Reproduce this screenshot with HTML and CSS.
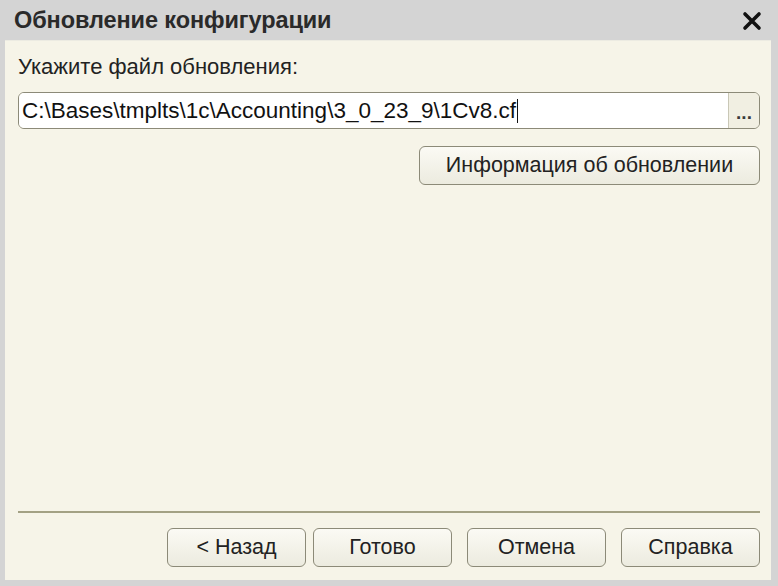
FILE: index.html
```html
<!DOCTYPE html>
<html>
<head>
    <title>Обновление конфигурации</title>
    <link rel="stylesheet" href="styles.css">
</head>
<body>
    <div class="dialog">
        <div class="titlebar">
            <span class="title">Обновление конфигурации</span>
            <svg class="close" width="20" height="20" viewBox="0 0 20 20">
                <path d="M3 3 L17 17 M17 3 L3 17" stroke="#111" stroke-width="3.6" stroke-linecap="round"/>
            </svg>
        </div>
        <div class="content">
            <div class="label">Укажите файл обновления:</div>
            <div class="file-field">
                <div class="file-input">C:\Bases\tmplts\1c\Accounting\3_0_23_9\1Cv8.cf<span class="caret"></span></div>
                <div class="file-btn">...</div>
            </div>
            <div class="info-row">
                <button class="btn info-btn">Информация об обновлении</button>
            </div>
            <div class="spacer"></div>
            <div class="separator"></div>
            <div class="buttons">
                <button class="btn">&lt; Назад</button>
                <button class="btn">Готово</button>
                <button class="btn gap">Отмена</button>
                <button class="btn gap">Справка</button>
            </div>
        </div>
    </div>
</body>
</html>
```

FILE: styles.css
```css
body { margin: 0; font-family: "Liberation Sans", Arial, sans-serif; background: #d4d4d4; }
.dialog { width: 778px; height: 586px; display: flex; flex-direction: column; background: #d4d4d4; box-sizing: border-box; padding: 0 7px 6px 5px; }
.titlebar { height: 40px; display: flex; align-items: center; justify-content: space-between; margin-left: -5px; margin-right: -7px; padding: 0 16px 0 14px; }
.title { font-size: 23.5px; font-weight: bold; color: #2a2a2a; letter-spacing: -0.1px; }
.close { display: block; margin-top: 2px; }
.content { flex: 1; display: flex; flex-direction: column; background: #f6f4e8; border-top: 1px solid #ecebe2; padding: 13px 11px 12px 13px; }
.label { font-size: 22px; color: #222; line-height: 26px; }
.file-field { display: flex; margin-top: 12px; height: 35px; border: 1px solid #8c8a78; border-radius: 6px; overflow: hidden; }
.file-input { flex: 1; background: #fff; font-size: 22.5px; color: #111; line-height: 35px; padding-left: 3px; white-space: nowrap; }
.caret { display: inline-block; width: 1px; height: 24px; background: #111; vertical-align: -5px; margin-left: 1px; }
.file-btn { width: 30px; border-left: 1px solid #c9c7b6; background: #f1efe2; font-size: 19px; font-weight: bold; color: #3a3a3a; text-align: center; line-height: 40px; letter-spacing: 0; }
.info-row { display: flex; justify-content: flex-end; margin-top: 17px; }
.btn { font-family: "Liberation Sans", Arial, sans-serif; font-size: 21.5px; color: #222; background: linear-gradient(#fbfaf4, #ecebdf); border: 1px solid #8c8a78; border-radius: 6px; height: 39px; padding: 0; cursor: default; }
.info-btn { width: 341px; }
.spacer { flex: 1; }
.separator { height: 2px; background: #a3a184; margin-bottom: 15px; }
.buttons { display: flex; justify-content: flex-end; gap: 7px; padding-bottom: 1px; }
.buttons .btn { width: 139px; }
.buttons .gap { margin-left: 8px; }
```
